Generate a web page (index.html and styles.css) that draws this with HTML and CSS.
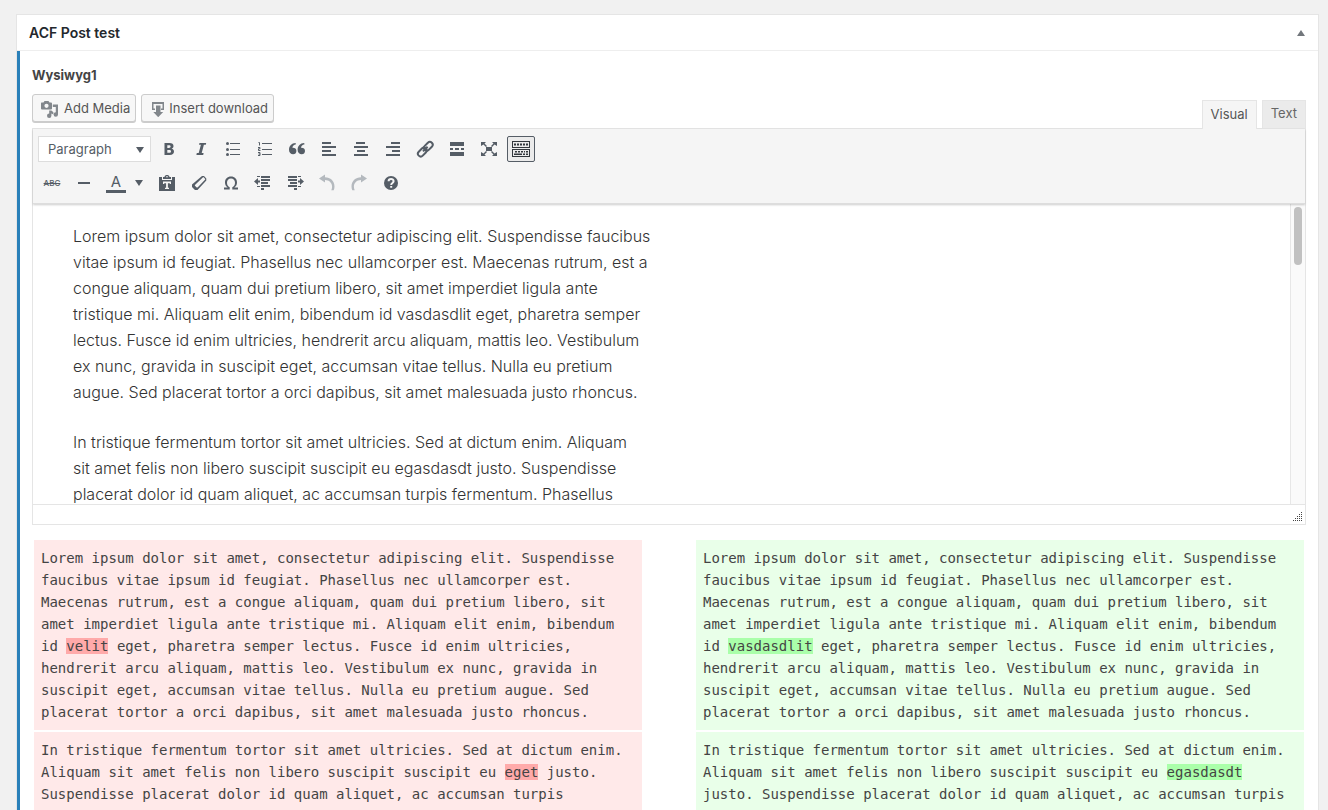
FILE: index.html
```
<!DOCTYPE html>
<html lang="en">
<head>
<meta charset="utf-8">
<title>ACF Post test</title>
<link rel="stylesheet" href="styles.css">
</head>
<body>
<svg class="sprite" aria-hidden="true">
  <symbol id="i-media" viewBox="0 0 20 20"><path fill-rule="evenodd" d="M1.500 4.500h2L4.500 3h4l1 1.500h1.500q1 0 1 1v5q0 1-1 1h-9q-1 0-1-1v-5q0-1 .5-1zM6.500 5.700a2.100 2.100 0 1 0 0 4.200a2.100 2.100 0 1 0 0-4.200z"/><path d="M12.800 6.500H18v10a2.200 2.200 0 1 1-2.200-2.200V9h-3z"/><path d="M9.200 12.500h2.200l2 1.800v2.200l-2-1v2.300a2.200 2.200 0 1 1-2.200-2.200z"/></symbol>
  <symbol id="i-download" viewBox="0 0 18 18"><path d="M3 3h12v8h-3V9.500h1.500V5h-9v4.500H6V11H3z"/><path d="M7 6.500h4.500V13h2.700L9.200 18.200 4.300 13H7z"/></symbol>
  <symbol id="i-bold" viewBox="0 0 20 20"><path fill-rule="evenodd" d="M5.500 4h5c2.600 0 4 1 4 3.100 0 1.400-.7 2.300-1.900 2.600 1.500.3 2.400 1.300 2.400 2.900 0 2.200-1.600 3.400-4.200 3.400H5.500zM8.300 6.200v2.700h1.700c1 0 1.600-.5 1.600-1.400S11 6.200 10 6.200zM8.300 11v2.800h2c1.100 0 1.700-.5 1.700-1.400 0-1-.7-1.400-1.800-1.400z"/></symbol>
  <symbol id="i-italic" viewBox="0 0 20 20"><path d="M8.500 4h6.700l-.4 1.700h-1.900L10.700 14h1.900l-.4 2H5.400l.4-2h1.900l2.200-8.300H8z"/></symbol>
  <symbol id="i-ul" viewBox="0 0 20 20"><circle cx="4.500" cy="4.500" r="1.500"/><circle cx="4.500" cy="10.500" r="1.500"/><circle cx="4.500" cy="15.500" r="1.500"/><path d="M7 4h10v1H7zM7 10h10v1H7zM7 15h10v1H7z"/></symbol>
  <symbol id="i-ol" viewBox="0 0 20 20"><path d="M7 4h10v1H7zM7 10h10v1H7zM7 15h10v1H7z"/><path class="thin" d="M3.500 3.500h1v3M3 8.500h2v1.300H3.500V11.500H5.500M3 13.500h2v3H3M3.500 15H5"/></symbol>
  <symbol id="i-quote" viewBox="0 0 20 20"><path d="M9 5.200C6.800 5.600 5.600 7 5.400 8.800c2.400-.2 4 1 4 3.100 0 2-1.300 3.300-3.300 3.300C3.800 15.200 2 13.500 2 10.700 2 7 4.700 4.100 8.500 4zM17.600 5.200c-2.200.4-3.400 1.800-3.600 3.600 2.400-.2 4 1 4 3.100 0 2-1.300 3.300-3.300 3.300-2.300 0-4.100-1.700-4.100-4.500 0-3.700 2.700-6.600 6.500-6.700z"/></symbol>
  <symbol id="i-left" viewBox="0 0 20 20"><path d="M3 3h9v2H3zM3 7h14v2H3zM3 11h9v2H3zM3 15h14v2H3z"/></symbol>
  <symbol id="i-center" viewBox="0 0 20 20"><path d="M5 3h9v2H5zM3 7h14v2H3zM6 11h8v2H6zM3 15h14v2H3z"/></symbol>
  <symbol id="i-right" viewBox="0 0 20 20"><path d="M8 3h9v2H8zM3 7h14v2H3zM9 11h8v2H9zM3 15h14v2H3z"/></symbol>
  <symbol id="i-link" viewBox="0 0 20 20"><g class="line"><rect x="8.300" y="4.500" width="10" height="5.600" rx="2.800" transform="rotate(-45 13.300 7.300)"/><rect x="2.300" y="10.300" width="10" height="5.600" rx="2.800" transform="rotate(-45 7.300 13.100)"/><path d="M8 12.400l4.600-4.600"/></g></symbol>
  <symbol id="i-more" viewBox="0 0 20 20"><path d="M3 3h14v4H3zM3 9h3v2H3zM8 9h4v2H8zM14 9h3v2h-3zM3 13h14v4H3z"/></symbol>
  <symbol id="i-full" viewBox="0 0 20 20"><path d="M7 8h6v4H7zM2 3h5L5.500 4.500 8 7 7 8 4.500 5.500 2 7zM18 3v4l-2.500-1.500L13 8l-1-1 2.500-2.500L13 3zM2 17v-4l2.500 1.500L7 12l1 1-2.500 2.500L7 17zM18 17h-5l1.500-1.500L12 13l1-1 2.500 2.500L18 13z"/></symbol>
  <symbol id="i-kitchen" viewBox="0 0 20 20"><path fill-rule="evenodd" d="M1 2h18v7H1zM2 3v5h16V3zM1 10h18v8H1zM2 11v6h16v-6z"/><path d="M3 4.500h2v2H3zM6 4.500h2v2H6zM9 4.500h2v2H9zM12 4.500h2v2h-2zM15 4.500h2v2h-2zM4 12h2v1.500H4zM7 12h2v1.500H7zM10 12h2v1.500h-2zM13 12h1v1.500h-1zM15 12h2v1.500h-2zM3 14.500h8V16H3zM12 14.500h2V16h-2zM15 14.500h2V16h-2z"/></symbol>
  <symbol id="i-hr" viewBox="0 0 20 20"><path d="M4 9h12v2H4z"/></symbol>
  <symbol id="i-paste" viewBox="0 0 20 20"><path fill-rule="evenodd" d="M2 4h3v3h10V4h3v14H2zM6 8.500V11h1.200v-.8h1.900v4.600H8V16h4v-1.200h-1.100v-4.600h1.900v.8H14V8.500z"/><path fill-rule="evenodd" d="M6 4h1.500c.3-2.600 4.700-2.600 5 0H14v2H6zM10 3a.8.8 0 1 0 0 1.600A.8.8 0 1 0 10 3z"/></symbol>
  <symbol id="i-eraser" viewBox="0 0 20 20"><path fill-rule="evenodd" d="M13 3h2l2.300 2.500v2L8.500 17H6l-3-3v-2.500zM13.800 4.500L6.200 11.700c-.5.500-.4 1 0 1.400l1.200 1.100c.4.400 1 .4 1.400 0L16 6.800c.3-.4.3-.8 0-1.100l-1.100-1.100c-.3-.3-.7-.4-1.100-.1z"/></symbol>
  <symbol id="i-omega" viewBox="0 0 20 20"><path d="M10 3.500c3.700 0 6 2.500 6 5.900 0 2.200-1 3.900-2.700 5H17v2h-5.700v-2.200c1.800-.9 2.700-2.400 2.700-4.500 0-2.600-1.500-4.300-4-4.300S6 7.100 6 9.700c0 2.100.9 3.600 2.700 4.500v2.200H3v-2h3.700C5 13.300 4 11.600 4 9.400 4 6 6.300 3.500 10 3.500z"/></symbol>
  <symbol id="i-outdent" viewBox="0 0 20 20"><path d="M4 3h3v1H4zM8 3h9v2H8zM8 6h9v2H8zM8 9h7v2H8zM4 13h3v1H4zM8 12h9v2H8zM8 15h3v2H8zM1 8.500 5 5v2.500h2v2H5V12z"/></symbol>
  <symbol id="i-indent" viewBox="0 0 20 20"><path d="M3 3h9v2H3zM13 3h3v1h-3zM3 6h9v2H3zM5 9h7v2H5zM3 12h9v2H3zM13 13h3v1h-3zM9 15h3v2H9zM19 8.500 15 5v2.500h-2v2h2V12z"/></symbol>
  <symbol id="i-undo" viewBox="0 0 20 20"><path d="M2 5.500 8 1.500v2.700c5.500 0 9.500 3.800 9.500 9.300 0 1.300-.3 2.500-.8 3.700h-2.400c.5-1.200.8-2.300.8-3.500 0-4-2.900-6.800-7.100-6.800v2.600z"/></symbol>
  <symbol id="i-redo" viewBox="0 0 20 20"><path d="M18 5.500 12 1.500v2.700c-5.500 0-9.500 3.800-9.500 9.300 0 1.300.3 2.500.8 3.700h2.400c-.5-1.200-.8-2.300-.8-3.500 0-4 2.900-6.800 7.100-6.800v2.600z"/></symbol>
  <symbol id="i-help" viewBox="0 0 20 20"><circle cx="10" cy="10" r="7"/><path class="mark" d="M7.600 8.300c0-3 5-3 5 0 0 1.700-2.400 1.600-2.400 3.600M10.200 13v1.800"/></symbol>
  <symbol id="i-caret" viewBox="0 0 8 6"><path d="M0 0h8L4 6z"/></symbol>
</svg>

<main class="postbox">
  <header class="postbox-head">
    <h2>ACF Post test</h2>
    <button class="toggle" type="button" aria-label="Toggle panel"><svg viewBox="0 0 8 6"><path d="M0 6h8L4 0z"/></svg></button>
  </header>
  <section class="field">
    <h3 class="label">Wysiwyg1</h3>
    <div class="tools">
      <div class="media">
        <button class="button" type="button"><svg class="icon"><use href="#i-media"/></svg>Add Media</button>
        <button class="button download" type="button"><svg class="icon"><use href="#i-download"/></svg>Insert download</button>
      </div>
      <div class="tabs">
        <button class="tab active" type="button">Visual</button>
        <button class="tab" type="button">Text</button>
      </div>
    </div>
    <div class="editor">
      <div class="toolbar">
        <div class="row">
          <div class="format">
            <select aria-label="Format"><option>Paragraph</option></select>
            <svg class="caret"><use href="#i-caret"/></svg>
          </div>
          <button class="tool" type="button" aria-label="Bold"><svg class="icon"><use href="#i-bold"/></svg></button>
          <button class="tool" type="button" aria-label="Italic"><svg class="icon"><use href="#i-italic"/></svg></button>
          <button class="tool" type="button" aria-label="Bulleted list"><svg class="icon"><use href="#i-ul"/></svg></button>
          <button class="tool" type="button" aria-label="Numbered list"><svg class="icon"><use href="#i-ol"/></svg></button>
          <button class="tool" type="button" aria-label="Blockquote"><svg class="icon"><use href="#i-quote"/></svg></button>
          <button class="tool" type="button" aria-label="Align left"><svg class="icon"><use href="#i-left"/></svg></button>
          <button class="tool" type="button" aria-label="Align center"><svg class="icon"><use href="#i-center"/></svg></button>
          <button class="tool" type="button" aria-label="Align right"><svg class="icon"><use href="#i-right"/></svg></button>
          <button class="tool" type="button" aria-label="Insert link"><svg class="icon"><use href="#i-link"/></svg></button>
          <button class="tool" type="button" aria-label="Read more"><svg class="icon"><use href="#i-more"/></svg></button>
          <button class="tool" type="button" aria-label="Fullscreen"><svg class="icon"><use href="#i-full"/></svg></button>
          <button class="tool pressed" type="button" aria-label="Toolbar toggle"><svg class="icon"><use href="#i-kitchen"/></svg></button>
        </div>
        <div class="row">
          <button class="tool strike" type="button" aria-label="Strikethrough"><s>ABC</s></button>
          <button class="tool" type="button" aria-label="Horizontal line"><svg class="icon"><use href="#i-hr"/></svg></button>
          <div class="color">
            <button class="tool" type="button" aria-label="Text color"><span class="swatch">A</span></button>
            <button class="tool more" type="button" aria-label="Choose color"><svg class="caret"><use href="#i-caret"/></svg></button>
          </div>
          <button class="tool" type="button" aria-label="Paste as text"><svg class="icon"><use href="#i-paste"/></svg></button>
          <button class="tool" type="button" aria-label="Clear formatting"><svg class="icon"><use href="#i-eraser"/></svg></button>
          <button class="tool" type="button" aria-label="Special character"><svg class="icon"><use href="#i-omega"/></svg></button>
          <button class="tool" type="button" aria-label="Decrease indent"><svg class="icon"><use href="#i-outdent"/></svg></button>
          <button class="tool" type="button" aria-label="Increase indent"><svg class="icon"><use href="#i-indent"/></svg></button>
          <button class="tool" type="button" aria-label="Undo" disabled><svg class="icon"><use href="#i-undo"/></svg></button>
          <button class="tool" type="button" aria-label="Redo" disabled><svg class="icon"><use href="#i-redo"/></svg></button>
          <button class="tool" type="button" aria-label="Keyboard shortcuts"><svg class="icon"><use href="#i-help"/></svg></button>
        </div>
      </div>
      <div class="viewport">
        <article class="content">
          <p>Lorem ipsum dolor sit amet, consectetur adipiscing elit. Suspendisse faucibus<br>vitae ipsum id feugiat. Phasellus nec ullamcorper est. Maecenas rutrum, est a<br>congue aliquam, quam dui pretium libero, sit amet imperdiet ligula ante<br>tristique mi. Aliquam elit enim, bibendum id vasdasdlit eget, pharetra semper<br>lectus. Fusce id enim ultricies, hendrerit arcu aliquam, mattis leo. Vestibulum<br>ex nunc, gravida in suscipit eget, accumsan vitae tellus. Nulla eu pretium<br>augue. Sed placerat tortor a orci dapibus, sit amet malesuada justo rhoncus.</p>
          <p>In tristique fermentum tortor sit amet ultricies. Sed at dictum enim. Aliquam<br>sit amet felis non libero suscipit suscipit eu egasdasdt justo. Suspendisse<br>placerat dolor id quam aliquet, ac accumsan turpis fermentum. Phasellus</p>
        </article>
        <div class="track"><div class="thumb"></div></div>
      </div>
      <div class="status"><svg class="grip" viewBox="0 0 10 10"><path d="M8 0h1v1H8zM6 2h1v1H6zM8 2h1v1H8zM4 4h1v1H4zM6 4h1v1H6zM8 4h1v1H8zM2 6h1v1H2zM4 6h1v1H4zM6 6h1v1H6zM8 6h1v1H8zM0 8h1v1H0zM2 8h1v1H2zM4 8h1v1H4zM6 8h1v1H6zM8 8h1v1H8z"/></svg></div>
    </div>
    <table class="diff">
      <colgroup><col><col class="gutter"><col></colgroup>
      <tbody>
        <tr>
          <td class="deleted">Lorem ipsum dolor sit amet, consectetur adipiscing elit. Suspendisse faucibus vitae ipsum id feugiat. Phasellus nec ullamcorper est. Maecenas rutrum, est a congue aliquam, quam dui pretium libero, sit amet imperdiet ligula ante tristique mi. Aliquam elit enim, bibendum id <del>velit</del> eget, pharetra semper lectus. Fusce id enim ultricies, hendrerit arcu aliquam, mattis leo. Vestibulum ex nunc, gravida in suscipit eget, accumsan vitae tellus. Nulla eu pretium augue. Sed placerat tortor a orci dapibus, sit amet malesuada justo rhoncus.</td>
          <td></td>
          <td class="added">Lorem ipsum dolor sit amet, consectetur adipiscing elit. Suspendisse faucibus vitae ipsum id feugiat. Phasellus nec ullamcorper est. Maecenas rutrum, est a congue aliquam, quam dui pretium libero, sit amet imperdiet ligula ante tristique mi. Aliquam elit enim, bibendum id <ins>vasdasdlit</ins> eget, pharetra semper lectus. Fusce id enim ultricies, hendrerit arcu aliquam, mattis leo. Vestibulum ex nunc, gravida in suscipit eget, accumsan vitae tellus. Nulla eu pretium augue. Sed placerat tortor a orci dapibus, sit amet malesuada justo rhoncus.</td>
        </tr>
        <tr>
          <td class="deleted">In tristique fermentum tortor sit amet ultricies. Sed at dictum enim. Aliquam sit amet felis non libero suscipit suscipit eu <del>eget</del> justo. Suspendisse placerat dolor id quam aliquet, ac accumsan turpis fermentum. Phasellus lobortis dignissim interdum.</td>
          <td></td>
          <td class="added">In tristique fermentum tortor sit amet ultricies. Sed at dictum enim. Aliquam sit amet felis non libero suscipit suscipit eu <ins>egasdasdt</ins> justo. Suspendisse placerat dolor id quam aliquet, ac accumsan turpis fermentum. Phasellus lobortis dignissim interdum.</td>
        </tr>
      </tbody>
    </table>
  </section>
</main>
</body>
</html>
```
FILE: styles.css
```
* { box-sizing: border-box; }
html { height: 100%; overflow: hidden; }
body {
  margin: 0;
  padding: 14px 9px 0 16px;
  height: 100%;
  overflow: hidden;
  background: #f1f1f1;
  color: #444;
  font: 13px/18px Inter, "Liberation Sans", sans-serif;
}
button, select { font: inherit; color: inherit; margin: 0; }
.sprite { display: none; }
.icon { width: 20px; height: 20px; fill: currentColor; flex: none; }
.caret { width: 8px; height: 6px; fill: #555d66; }
.line { fill: none; stroke: currentColor; stroke-width: 2; }
.thin { fill: none; stroke: currentColor; stroke-width: 1; }
.mark { fill: none; stroke: #f5f5f5; stroke-width: 2; }

.postbox { background: #fff; border: 1px solid #e5e5e5; min-height: 100%; }
.postbox-head {
  display: flex;
  justify-content: space-between;
  align-items: center;
  height: 36px;
  padding: 0 13px 0 12px;
  border-bottom: 1px solid #eee;
}
.postbox-head h2 { margin: 0; font-size: 14px; font-weight: 600; color: #23282d; }
.toggle { display: flex; border: 0; padding: 0; background: none; }
.toggle svg { width: 8px; height: 6px; fill: #72777c; }

.field { border-left: 3px solid #2a80b9; padding: 15px 12px 0; }
.label { margin: 0; font-size: 13px; font-weight: 700; }
.tools { display: flex; justify-content: space-between; align-items: flex-end; margin-top: 10px; }
.media { display: flex; gap: 5px; padding-bottom: 6px; }
.button {
  display: flex;
  align-items: center;
  gap: 4px;
  height: 28px;
  padding: 0 5px 0 7px;
  border: 1px solid #ccc;
  border-radius: 3px;
  background: #f7f7f7;
  box-shadow: 0 1px 0 #ccc;
  color: #555;
}
.button .icon { color: #82878c; }
.button.download { gap: 2px; }
.download .icon { width: 18px; height: 18px; }
.tabs { display: flex; gap: 5px; }
.tab {
  height: 28px;
  padding: 0 8px 3px;
  border: 1px solid #e5e5e5;
  border-bottom: 0;
  background: #ebebeb;
  color: #666;
}
.tab.active { height: 29px; margin-bottom: -1px; position: relative; z-index: 1; background: #f5f5f5; color: #555; }

.editor { border: 1px solid #e5e5e5; }
.toolbar {
  display: grid;
  gap: 8px;
  padding: 7px 5px;
  background: #f5f5f5;
  border-bottom: 1px solid #ddd;
  box-shadow: 0 1px 2px rgba(0, 0, 0, .2);
  position: relative;
}
.row { display: flex; gap: 4px; }
.format { position: relative; }
.format select {
  appearance: none;
  display: block;
  width: 113px;
  height: 26px;
  padding: 0 9px;
  border: 1px solid #ddd;
  border-radius: 0;
  background: #fff;
  color: #555d66;
}
.format .caret { position: absolute; right: 7px; top: 11px; pointer-events: none; }
.tool {
  display: flex;
  align-items: center;
  justify-content: center;
  width: 28px;
  height: 26px;
  padding: 0;
  border: 1px solid transparent;
  border-radius: 2px;
  background: none;
  color: #555d66;
}
.tool.pressed { border-color: #555d66; background: #ebebeb; color: #32373c; }
.tool:disabled { color: #b4b9be; }
.strike { font-size: 8px; font-weight: 500; }
.color { display: flex; padding-right: 1px; }
.tool.more { width: 18px; }
.swatch { width: 20px; border-bottom: 3px solid #555d66; font-size: 15px; line-height: 16px; }

.viewport { display: flex; height: 300px; overflow: hidden; justify-content: space-between; }
.content {
  padding: 19px 40px 0;
  font: 300 16px/26px Inter, "Liberation Sans", sans-serif;
  color: #333;
  white-space: nowrap;
}
.content p { margin: 0 0 24px; }
.track { width: 15px; padding: 3px; background: #fafafa; border-left: 1px solid #e7e7e7; }
.thumb { width: 8px; height: 58px; border-radius: 4px; background: #c1c1c1; }
.status { display: flex; justify-content: flex-end; align-items: flex-end; height: 20px; padding: 2px; border-top: 1px solid #e5e5e5; }
.grip { width: 10px; height: 10px; fill: #444; }

.diff {
  width: 100%;
  margin-top: 13px;
  table-layout: fixed;
  border-spacing: 2px;
  font: 14px/22px "DejaVu Sans Mono", monospace;
}
.gutter { width: 50px; }
.diff td { padding: 7px; vertical-align: top; }
.deleted { background: #ffe9e9; }
.added { background: #e9ffe9; }
.diff del { background: #faa; text-decoration: none; }
.diff ins { background: #afa; text-decoration: none; }
```
